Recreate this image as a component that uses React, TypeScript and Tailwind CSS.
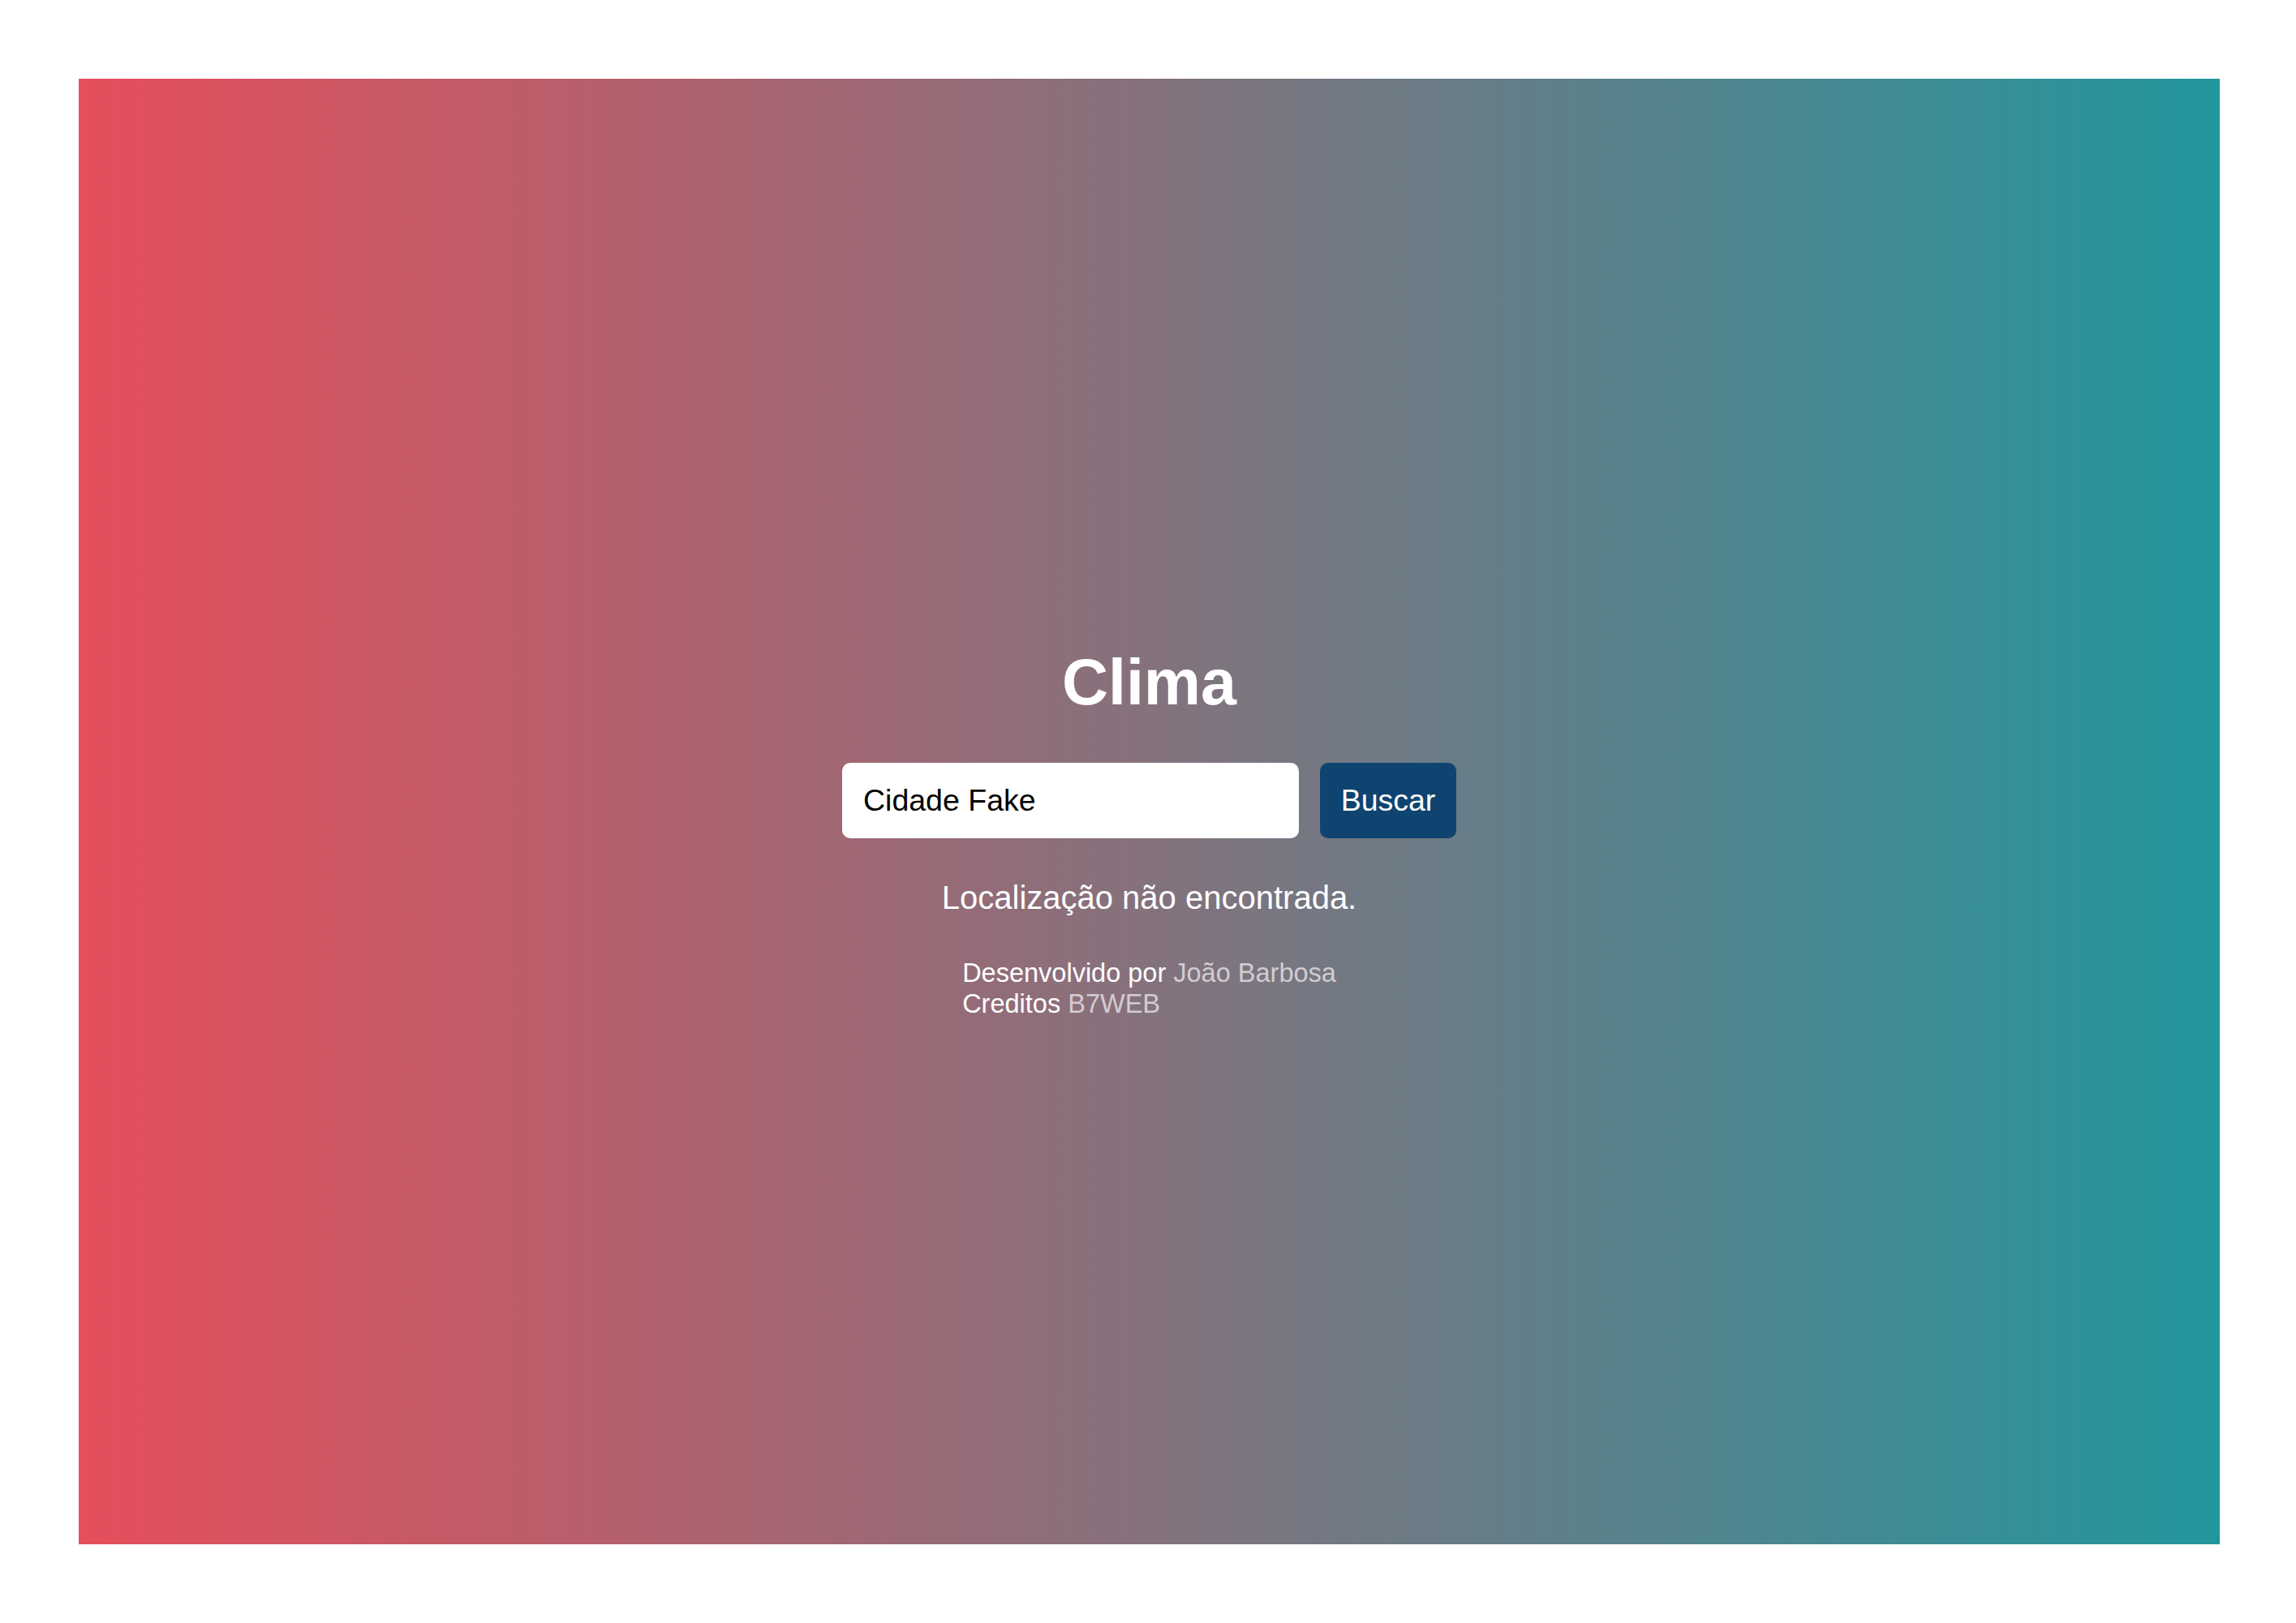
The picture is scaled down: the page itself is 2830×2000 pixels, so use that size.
export default function App() {
  return (
    <div className="min-h-screen bg-white pl-[97px] pt-[97px] font-['Liberation_Sans',Arial,sans-serif]">
      <main className="flex h-[1806px] w-[2639px] flex-col items-center bg-[linear-gradient(to_right,#e64e5c,#22969e)] pt-[704px] text-white">
        <h1 className="text-[79px] font-bold leading-[79px]">Clima</h1>

        {/* Search */}
        <form className="mt-[60px] flex gap-[26px]" onSubmit={e => e.preventDefault()}>
          <input
            type="text"
            defaultValue="Cidade Fake"
            className="h-[93px] w-[563px] rounded-[10px] bg-white px-[26px] text-[37.5px] text-black outline-none"
          />
          <button
            type="submit"
            className="h-[93px] w-[168px] rounded-[10px] bg-[#0f4470] text-[37.5px] text-white"
          >
            Buscar
          </button>
        </form>

        <p className="mt-[50px] text-[40px] leading-[46px]">Localização não encontrada.</p>

        <footer className="mt-[51px] text-[32.5px] leading-[38px]">
          <div>
            Desenvolvido por <span className="text-[#d2ccd0]">João Barbosa</span>
          </div>
          <div>
            Creditos <span className="text-[#d2ccd0]">B7WEB</span>
          </div>
        </footer>
      </main>
    </div>
  )
}
